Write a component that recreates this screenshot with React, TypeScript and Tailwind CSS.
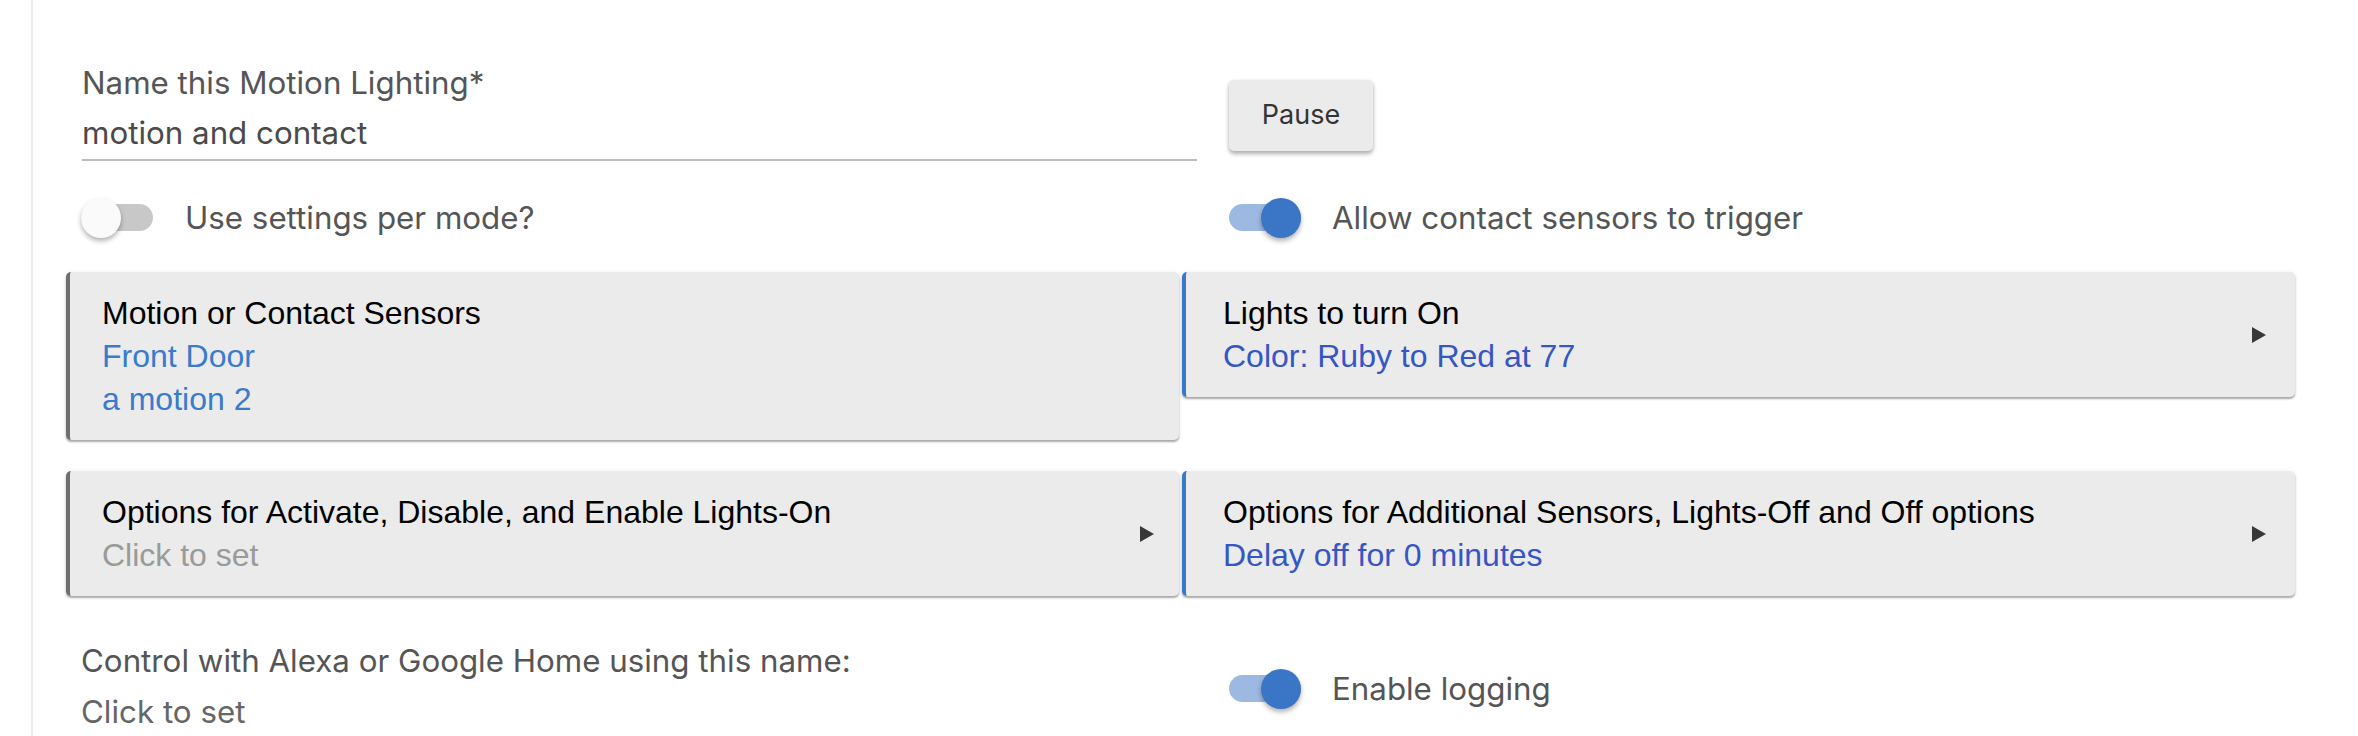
import React from "react";

type SwitchProps = { on?: boolean };

const Switch = ({ on = false }: SwitchProps) => (
  <div className="relative h-[40px] w-[72px] shrink-0">
    <div
      className={`absolute left-0 top-[6px] h-[27px] w-[72px] rounded-full ${
        on ? "bg-[#9cb9e1]" : "bg-[#c8c8c8]"
      }`}
    />
    <div
      className={`absolute top-0 h-[40px] w-[40px] rounded-full shadow-[0_3px_5px_rgba(0,0,0,0.3)] ${
        on ? "right-0 bg-[#3a76c5]" : "left-0 bg-[#fafafa]"
      }`}
    />
  </div>
);

const Arrow = () => (
  <svg width="14" height="16" viewBox="0 0 14 16" className="shrink-0">
    <polygon points="0,0 14,8 0,16" fill="#383838" />
  </svg>
);

interface CardProps {
  title: string;
  lines: { text: string; color: string }[];
  accent: "gray" | "blue";
  arrow?: boolean;
}

const Card = ({ title, lines, accent, arrow = false }: CardProps) => (
  <div
    className={`flex items-center justify-between rounded-[5px] border-l-4 bg-[#ebebeb] pb-[19px] pt-[20px] shadow-[0_2px_2px_rgba(0,0,0,0.32),0_0_5px_rgba(0,0,0,0.07)] ${
      accent === "blue"
        ? "border-[#3a78c9] pl-[37px] pr-[29px]"
        : "border-[#6f6f6f] pl-[32px] pr-[25px]"
    }`}
  >
    <div className="font-['Liberation_Sans',Arial,sans-serif] text-[32px] leading-[43px]">
      <div className="text-black">{title}</div>
      {lines.map((l) => (
        <div key={l.text} className={l.color}>
          {l.text}
        </div>
      ))}
    </div>
    {arrow && <Arrow />}
  </div>
);

const labelCls = "text-[31.3px] leading-[40px] text-[#555555]";

export default function App() {
  return (
    <div className="min-h-screen bg-white font-['Inter','Roboto',sans-serif]">
      <div className="ml-[31px] min-h-[736px] border-l-2 border-[#ececec] pl-[33px] pr-[63px] pt-[63px]">
        {/* name + pause */}
        <div className="grid grid-cols-2 gap-x-[3px]">
          <div className="mr-[-18px] pl-[16px]">
            <div className={labelCls}>Name this Motion Lighting*</div>
            <div className="mt-[10px] border-b-2 border-[#bdbdbd] pb-[6px] text-[31.3px] leading-[40px] text-[#4a4a4a]">
              motion and contact
            </div>
          </div>
          <div className="pl-[47px] pt-[17px]">
            <button className="h-[71px] w-[144px] rounded-[5px] bg-[#ebebeb] text-[27px] text-[#333333] shadow-[0_3px_4px_rgba(0,0,0,0.3),0_0_4px_rgba(0,0,0,0.06)]">
              Pause
            </button>
          </div>
        </div>

        {/* toggles */}
        <div className="mt-[37px] grid grid-cols-2 gap-x-[3px]">
          <div className="flex items-center gap-[32px] pl-[15px]">
            <Switch />
            <span className={labelCls}>Use settings per mode?</span>
          </div>
          <div className="flex items-center gap-[31px] pl-[47px]">
            <Switch on />
            <span className={labelCls}>Allow contact sensors to trigger</span>
          </div>
        </div>

        {/* sensors + lights */}
        <div className="mt-[34px] grid grid-cols-2 items-start gap-x-[3px]">
          <Card
            accent="gray"
            title="Motion or Contact Sensors"
            lines={[
              { text: "Front Door", color: "text-[#3a7bcc]" },
              { text: "a motion 2", color: "text-[#3a7bcc]" },
            ]}
          />
          <Card
            accent="blue"
            arrow
            title="Lights to turn On"
            lines={[{ text: "Color: Ruby to Red at 77", color: "text-[#3656c4]" }]}
          />
        </div>

        {/* options */}
        <div className="mt-[31px] grid grid-cols-2 items-start gap-x-[3px]">
          <Card
            accent="gray"
            arrow
            title="Options for Activate, Disable, and Enable Lights-On"
            lines={[{ text: "Click to set", color: "text-[#9a9a9a]" }]}
          />
          <Card
            accent="blue"
            arrow
            title="Options for Additional Sensors, Lights-Off and Off options"
            lines={[{ text: "Delay off for 0 minutes", color: "text-[#3656c4]" }]}
          />
        </div>

        {/* alexa + logging */}
        <div className="mt-[45px] grid grid-cols-2 gap-x-[3px]">
          <div className="pl-[15px]">
            <div className={labelCls}>Control with Alexa or Google Home using this name:</div>
            <div className="mt-[11px] text-[31.3px] leading-[40px] text-[#666666]">Click to set</div>
          </div>
          <div className="flex items-start gap-[31px] pl-[47px] pt-[28px]">
            <Switch on />
            <span className={labelCls}>Enable logging</span>
          </div>
        </div>
      </div>
    </div>
  );
}
